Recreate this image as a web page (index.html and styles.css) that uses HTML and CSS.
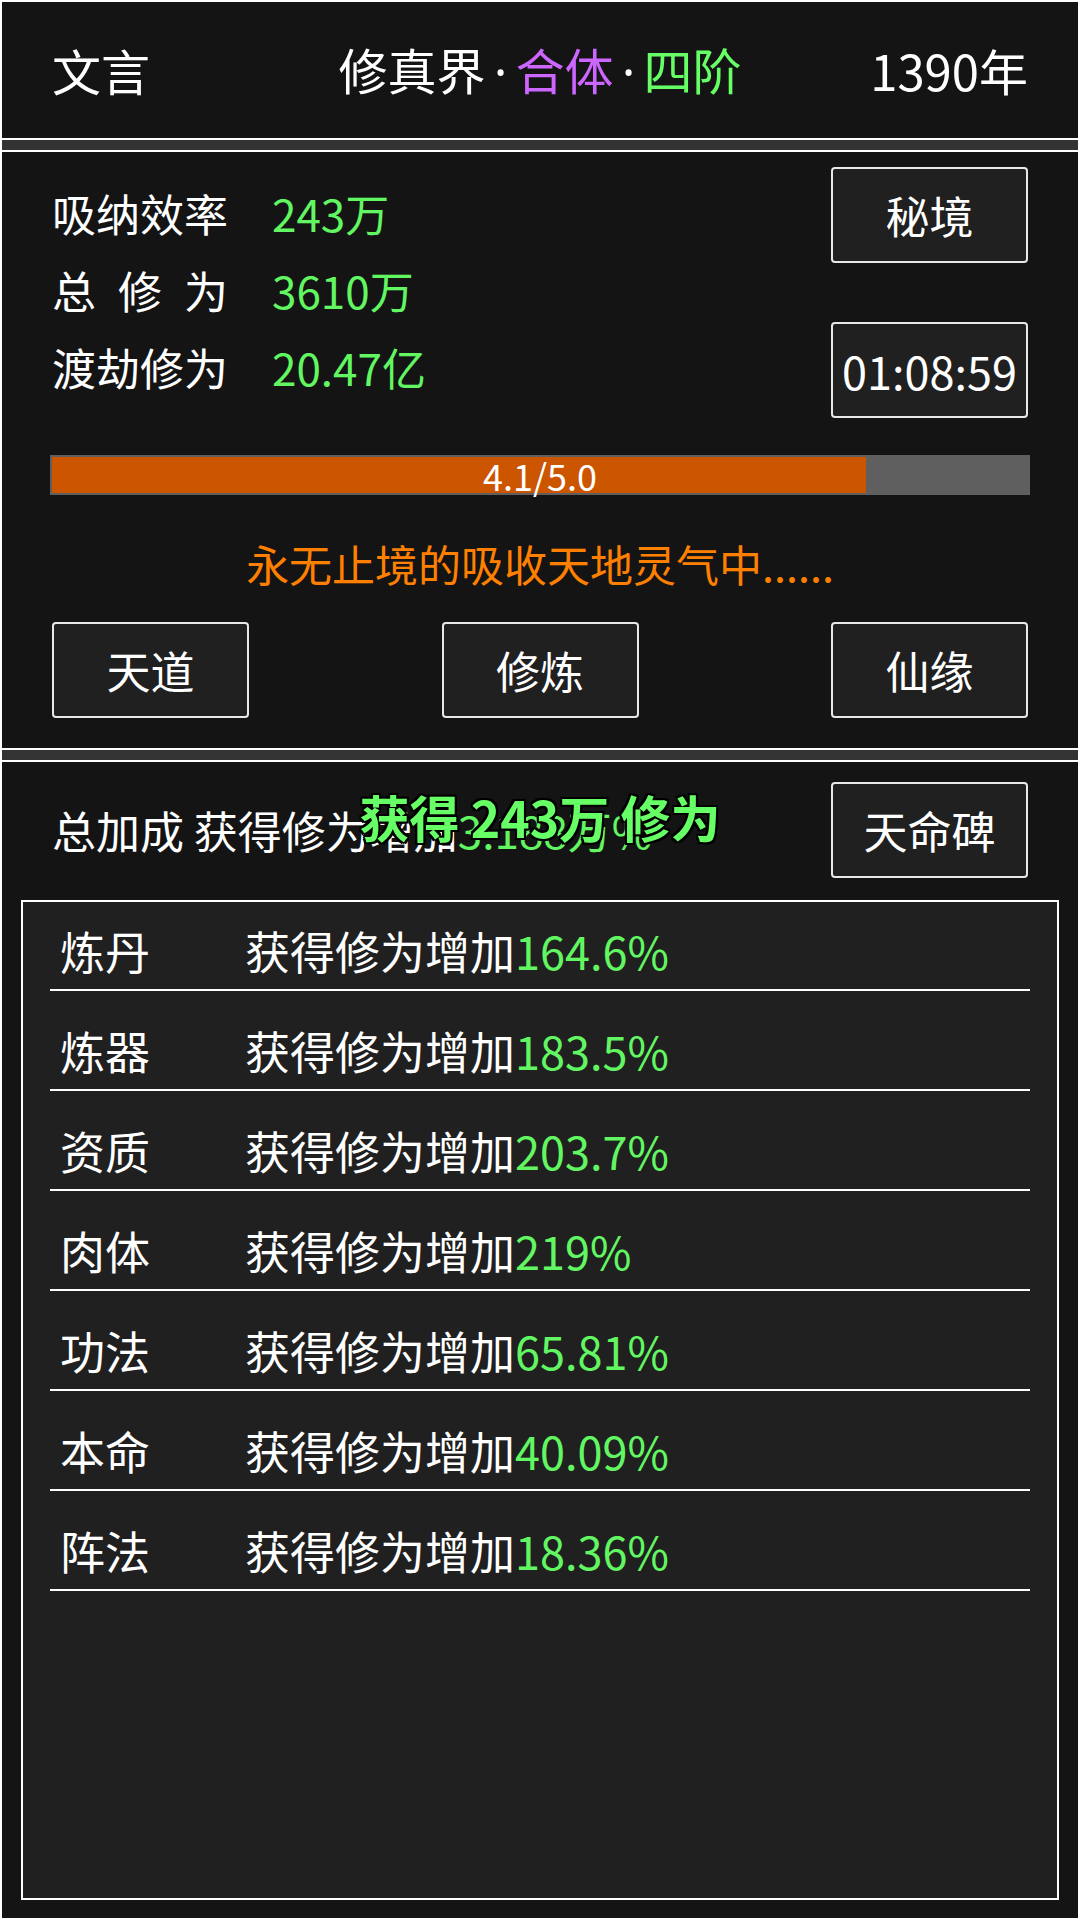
FILE: index.html
```html
<!DOCTYPE html>
<html lang="zh-CN">
<head>
<meta charset="utf-8">
<title>修真界</title>
<link rel="stylesheet" href="styles.css">
</head>
<body>
<div class="page">
  <header class="panel top-bar">
    <div class="tb-left">文言</div>
    <div class="tb-center">修真界<span class="dot">·</span><span class="purple">合体</span><span class="dot">·</span><span class="green">四阶</span></div>
    <div class="tb-right">1390年</div>
  </header>
  <div class="sep"></div>
  <section class="panel main">
    <div class="main-top">
      <div class="stats">
        <div class="stat"><span class="label">吸纳效率</span><span class="val">243万</span></div>
        <div class="stat"><span class="label spread"><span>总</span><span>修</span><span>为</span></span><span class="val">3610万</span></div>
        <div class="stat"><span class="label">渡劫修为</span><span class="val">20.47亿</span></div>
      </div>
      <div class="side-btns">
        <div class="btn">秘境</div>
        <div class="btn timer">01:08:59</div>
      </div>
    </div>
    <div class="bar">
      <div class="bar-fill" style="width:83.4%"></div>
      <div class="bar-text">4.1/5.0</div>
    </div>
    <div class="status">永无止境的吸收天地灵气中......</div>
    <div class="actions">
      <div class="btn">天道</div>
      <div class="btn">修炼</div>
      <div class="btn">仙缘</div>
    </div>
  </section>
  <div class="sep"></div>
  <section class="panel bonus">
    <div class="bonus-head">
      <div class="bonus-total">总加成 获得修为增加<span class="val">3.188万%</span></div>
      <div class="btn">天命碑</div>
    </div>
    <div class="toast">获得 243万 修为</div>
    <div class="list">
      <div class="row"><span class="rname">炼丹</span><span>获得修为增加<span class="val">164.6%</span></span></div>
      <div class="row"><span class="rname">炼器</span><span>获得修为增加<span class="val">183.5%</span></span></div>
      <div class="row"><span class="rname">资质</span><span>获得修为增加<span class="val">203.7%</span></span></div>
      <div class="row"><span class="rname">肉体</span><span>获得修为增加<span class="val">219%</span></span></div>
      <div class="row"><span class="rname">功法</span><span>获得修为增加<span class="val">65.81%</span></span></div>
      <div class="row"><span class="rname">本命</span><span>获得修为增加<span class="val">40.09%</span></span></div>
      <div class="row"><span class="rname">阵法</span><span>获得修为增加<span class="val">18.36%</span></span></div>
    </div>
  </section>
</div>
</body>
</html>
```
FILE: styles.css
```css
* { box-sizing: border-box; }
html, body {
  margin: 0;
  padding: 0;
  background: #ffffff;
}
body {
  font-family: "Noto Sans CJK SC", "Noto Sans", sans-serif;
  color: #ffffff;
  width: 1080px;
  height: 1920px;
  overflow: hidden;
}
.page {
  padding: 2px 2px;
  height: 1920px;
  display: flex;
  flex-direction: column;
}
.panel {
  background: #141414;
}
.sep {
  height: 10px;
  margin: 2px 0;
  background: #333333;
  flex: none;
}
.green { color: #66ff66; }
.purple { color: #cc66ff; }
.val { color: #62f762; }

/* top bar */
.top-bar {
  height: 136px;
  flex: none;
  display: grid;
  grid-template-columns: 1fr auto 1fr;
  align-items: center;
  padding: 0 50px;
  font-size: 49px;
  line-height: 60px;
}
.tb-left { justify-self: start; }
.tb-center { justify-self: center; white-space: nowrap; }
.tb-right { justify-self: end; }
.dot {
  display: inline-block;
  width: 30px;
  text-align: center;
  font-family: "Noto Sans", sans-serif;
}

/* main panel */
.main {
  height: 596px;
  flex: none;
  padding: 15px 50px 0;
  display: flex;
  flex-direction: column;
}
.main-top {
  display: flex;
  justify-content: space-between;
  align-items: flex-start;
}
.stats {
  padding-top: 7px;
  display: flex;
  flex-direction: column;
}
.stat {
  height: 77px;
  display: flex;
  align-items: center;
  font-size: 44px;
}
.label {
  width: 176px;
  margin-right: 44px;
  white-space: nowrap;
}
.label.spread {
  display: flex;
  justify-content: space-between;
}
.side-btns {
  display: flex;
  flex-direction: column;
  gap: 59px;
}
.btn {
  width: 197px;
  height: 96px;
  background: #202020;
  border: 2px solid #e8e8e8;
  border-radius: 4px;
  display: flex;
  align-items: center;
  justify-content: center;
  font-size: 44px;
  color: #ffffff;
  white-space: nowrap;
}
.btn.timer {
  font-size: 45px;
}
.bar {
  position: relative;
  margin: 37px -2px 0;
  height: 40px;
  background: #5f5f5f;
  padding: 2px;
}
.bar-fill {
  height: 36px;
  background: #cc5500;
}
.bar-text {
  position: absolute;
  left: 0;
  right: 0;
  top: 0;
  height: 40px;
  line-height: 40px;
  text-align: center;
  font-size: 36px;
  color: #ffffff;
}
.status {
  margin-top: 38px;
  height: 60px;
  line-height: 60px;
  text-align: center;
  font-size: 43px;
  color: #ff8000;
}
.actions {
  margin-top: 29px;
  display: flex;
  justify-content: space-between;
}

/* bonus panel */
.bonus {
  position: relative;
  flex: 1;
  padding: 20px 19px 18px;
  display: flex;
  flex-direction: column;
}
.bonus-head {
  display: flex;
  justify-content: space-between;
  align-items: center;
  padding: 0 31px;
}
.bonus-total {
  font-size: 44px;
  white-space: nowrap;
}
.toast {
  position: absolute;
  left: 0;
  right: 0;
  top: 24px;
  line-height: 60px;
  text-align: center;
  font-size: 50px;
  font-weight: bold;
  color: #66ff66;
  text-shadow: 2px 0 0 #000, -2px 0 0 #000, 0 2px 0 #000, 0 -2px 0 #000,
    2px 2px 0 #000, -2px -2px 0 #000, 2px -2px 0 #000, -2px 2px 0 #000;
  white-space: pre;
}
.list {
  margin-top: 22px;
  flex: 1;
  background: #202020;
  border: 2px solid #ffffff;
  padding: 0 27px;
}
.row {
  height: 89px;
  padding-top: 10px;
  line-height: 77px;
  border-bottom: 2px solid #ffffff;
  margin-bottom: 11px;
  font-size: 45px;
  display: flex;
  white-space: nowrap;
}
.rname {
  width: 195px;
  padding-left: 10px;
}
```
